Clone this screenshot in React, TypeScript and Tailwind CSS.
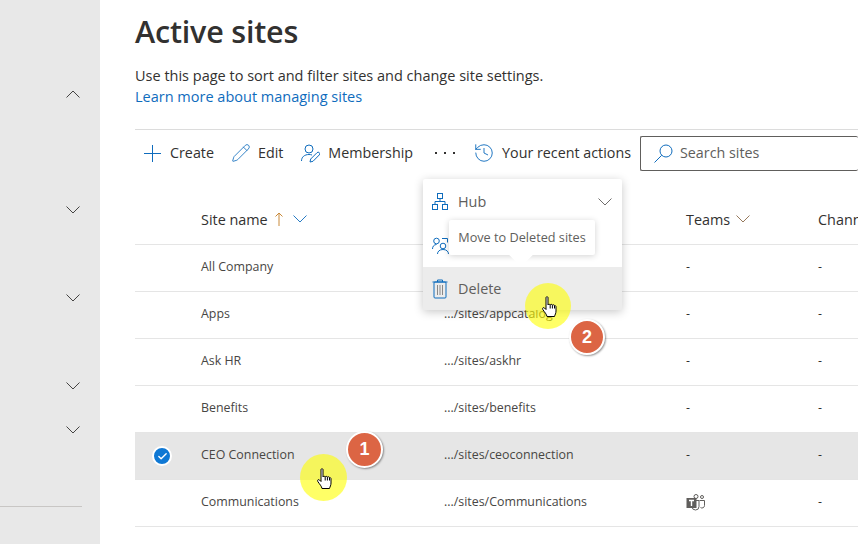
import { Pencil, History, Check } from "lucide-react"

const font = { fontFamily: '"Open Sans", "Noto Sans", sans-serif' }

const rows = [
  { name: "All Company", url: "", teams: "-" },
  { name: "Apps", url: ".../sites/appcatalog", teams: "-" },
  { name: "Ask HR", url: ".../sites/askhr", teams: "-" },
  { name: "Benefits", url: ".../sites/benefits", teams: "-" },
  { name: "CEO Connection", url: ".../sites/ceoconnection", teams: "-", selected: true },
  { name: "Communications", url: ".../sites/Communications", teams: "icon" },
]

function Chev({ up, color = "#323130", className = "" }: { up?: boolean; color?: string; className?: string }) {
  return (
    <svg className={className} width="14" height="8" viewBox="0 0 14 8" fill="none" stroke={color} strokeWidth="0.9">
      <path d={up ? "M.5 7.500L7 1l6.500 6.500" : "M.5.500L7 7 13.500.500"} />
    </svg>
  )
}

function PlusIcon() {
  return (
    <svg className="ml-[9px]" width="17" height="17" viewBox="0 0 17 17" stroke="#0f6cbd" strokeWidth="1">
      <path d="M8.500 0v17M0 8.500h17" />
    </svg>
  )
}

function SearchIcon() {
  return (
    <svg width="19" height="19" viewBox="0 0 19 19" fill="none" stroke="#0f6cbd" strokeWidth="1">
      <circle cx="12" cy="7" r="6" />
      <path d="M7.700 11.300L.5 18.500" />
    </svg>
  )
}

function HubIcon() {
  return (
    <svg width="18" height="19" viewBox="0 0 18 19" fill="none" stroke="#0f6cbd" strokeWidth="1">
      <rect x="6.500" y="1.500" width="5" height="5" />
      <rect x="1.500" y="12.500" width="5" height="5" />
      <rect x="11.500" y="12.500" width="5" height="5" />
      <path d="M9 6.500V9.500M4 12.500V9.500H14V12.500" />
    </svg>
  )
}

function MembershipIcon() {
  return (
    <svg className="ml-[18px]" width="19" height="19" viewBox="0 0 19 19" fill="none" stroke="#0f6cbd" strokeWidth="1">
      <circle cx="8" cy="5" r="4" />
      <path d="M.5 17c0-4 3-6.500 7.500-6.500 1.200 0 2.200.2 3 .5" />
      <path d="M9 18l.7-3 6.300-6.300a1.500 1.500 0 0 1 2.300 2.200L12 17.300z" />
    </svg>
  )
}

function MembersIcon() {
  return (
    <svg width="18" height="18" viewBox="0 0 18 18" fill="none" stroke="#0f6cbd" strokeWidth="1">
      <circle cx="4.500" cy="5" r="2.800" />
      <circle cx="11" cy="10" r="2.800" />
      <path d="M.5 13c0-2.500 1.500-4.500 4-4.500M5.500 18c0-2.500 2-4.500 5.500-4.500s5.500 2 5.500 4.500" />
      <path d="M10 2.500h5.500v4" />
    </svg>
  )
}

function TrashIcon() {
  return (
    <svg width="16" height="20" viewBox="0 0 16 20" fill="none" stroke="#0f6cbd" strokeWidth="1">
      <path d="M.5 3h15M5.500 3V1h5v2" />
      <rect x="2" y="3" width="12" height="16" rx="1" />
      <path d="M5.500 6v10M8 6v10M10.500 6v10" stroke="#8a8886" />
    </svg>
  )
}

function TeamsIcon() {
  return (
    <svg width="20" height="18" viewBox="0 0 20 18" fill="none" stroke="#605e5c" strokeWidth="1">
      <circle cx="10" cy="3.500" r="2" />
      <circle cx="16" cy="4" r="1.500" />
      <path d="M6 7.500h7v6a3.500 3.500 0 0 1-7 0M13.500 7.500h5v5a2.500 2.500 0 0 1-4 2" />
      <rect x="0.500" y="5" width="10" height="10" fill="#605e5c" stroke="none" />
      <path d="M3 7.500h5M5.500 7.500v5.500" stroke="#ffffff" strokeWidth="1.400" />
    </svg>
  )
}

function HandCursor() {
  return (
    <svg width="16" height="22" viewBox="0 0 16 22" fill="#ffffff" stroke="#000000" strokeWidth="1" strokeLinejoin="round">
      <path d="M4 1.500c0-1 2-1 2 0V9c.3-1 2-1 2.200 0 .3-.9 2-.9 2.200.2.400-.8 2.100-.6 2.100.5.500-.4 1.500 0 1.500 1V15c0 2.500-1 3.500-1.500 5.500h-7.500C4.500 18 2.800 16.500.8 13.500c-.8-1.500.7-2.500 1.700-1.500L4 13.500z" />
      <path d="M8.200 9v3.500M10.400 9.200v3.300M12.500 10v2.500" />
    </svg>
  )
}

export default function App() {
  return (
    <div className="relative flex w-[858px] h-[544px] overflow-hidden bg-white text-[#323130]" style={font}>
      {/* left nav */}
      <aside className="w-[100px] h-full shrink-0 bg-[#e8e8e8] flex flex-col relative">
        <Chev up className="absolute left-[66px] top-[90px]" />
        <Chev className="absolute left-[66px] top-[206px]" />
        <Chev className="absolute left-[66px] top-[294px]" />
        <Chev className="absolute left-[66px] top-[382px]" />
        <Chev className="absolute left-[66px] top-[426px]" />
        <div className="absolute left-0 top-[506px] w-[82px] h-px bg-[#c8c6c4]" />
      </aside>

      <main className="flex-1 min-w-0 pl-[35px] pt-[11px]">
        <h1 className="text-[30.500px] leading-[40px] font-semibold tracking-[-0.2px]">Active sites</h1>
        <p className="mt-[14px] text-[14.500px] leading-[21px]">Use this page to sort and filter sites and change site settings.</p>
        <a className="block text-[14.500px] leading-[21px] text-[#0f6cbd]">Learn more about managing sites</a>

        <div className="mt-[22px] w-[723px] border-t border-[#dcdcdc] h-[47px] flex items-center text-[14.300px] whitespace-nowrap">
          <PlusIcon />
          <span className="ml-[9px]">Create</span>
          <Pencil className="ml-[17px] text-[#0f6cbd]" size={20} strokeWidth={1} />
          <span className="ml-[7px]">Edit</span>
          <MembershipIcon />
          <span className="ml-[8px]">Membership</span>
          <span className="ml-[22px] w-[20px] flex justify-between">
            <i className="w-[2px] h-[2px] bg-[#323130]" />
            <i className="w-[2px] h-[2px] bg-[#323130]" />
            <i className="w-[2px] h-[2px] bg-[#323130]" />
          </span>
          <History className="ml-[18px] text-[#0f6cbd]" size={22} strokeWidth={1} />
          <span className="ml-[7px]">Your recent actions</span>
          <div className="ml-[9px] flex-1 h-[35px] border border-[#605e5c] border-r-0 rounded-[2px] flex items-center pl-[13px]">
            <SearchIcon />
            <span className="ml-[7px] text-[#605e5c]">Search sites</span>
          </div>
        </div>

        <div className="w-[723px] h-[69px] border-b border-[#e5e5e5] grid grid-cols-[66px_243px_242px_132px_40px] items-center text-[14.400px] font-medium whitespace-nowrap pt-[19px]">
          <span />
          <span className="flex items-center">
            Site name
            <svg className="ml-[7px]" width="8" height="14" viewBox="0 0 8 14" fill="none" stroke="#c98a3a" strokeWidth="1">
              <path d="M4 14V1M.5 4.500L4 1l3.500 3.500" />
            </svg>
            <Chev color="#0f6cbd" className="ml-[10px]" />
          </span>
          <span />
          <span className="flex items-center">
            Teams
            <Chev color="#8a6a4a" className="ml-[6px]" />
          </span>
          <span className="overflow-hidden">Channels</span>
        </div>

        {rows.map((r) => (
          <div
            key={r.name}
            className={`w-[723px] h-[47px] pb-[2px] border-b border-[#e5e5e5] grid grid-cols-[66px_243px_242px_132px_40px] items-center text-[12.400px] whitespace-nowrap ${r.selected ? "bg-[#e6e6e6]" : ""}`}
          >
            <span className="flex justify-center">
              {r.selected && (
                <span className="ml-[-12px] mt-[2px] w-[20px] h-[20px] rounded-full bg-[#0f78d4] border-2 border-white flex items-center justify-center">
                  <Check className="text-white" size={11} strokeWidth={3} />
                </span>
              )}
            </span>
            <span className="text-[#484644]">{r.name}</span>
            <span className="text-[#484644]">{r.url}</span>
            <span>{r.teams === "icon" ? <TeamsIcon /> : "-"}</span>
            <span>-</span>
          </div>
        ))}
      </main>

      {/* overflow menu */}
      <div className="absolute left-[423px] top-[179px] w-[199px] h-[131px] bg-white rounded-[2px] shadow-[0_2px_10px_rgba(0,0,0,0.22)] text-[14.400px] text-[#605e5c]">
        <div className="h-[44px] flex items-center pl-[8px] pr-[10px] pt-[1px]">
          <HubIcon />
          <span className="ml-[9px] flex-1">Hub</span>
          <Chev color="#605e5c" />
        </div>
        <div className="h-[44px] flex items-center pl-[9px]">
          <MembersIcon />
        </div>
        <div className="h-[43px] flex items-center pl-[9px] pt-[1px] bg-[#ececec]">
          <TrashIcon />
          <span className="ml-[10px]">Delete</span>
        </div>
      </div>

      {/* tooltip */}
      <div className="absolute left-[449px] top-[220px] w-[146px] h-[35px] bg-white rounded-[2px] shadow-[0_1px_6px_rgba(0,0,0,0.18)] flex items-center justify-center text-[12.700px] text-[#605e5c] whitespace-nowrap">
        Move to Deleted sites
        <div className="absolute left-[63px] top-[25px] w-[18px] h-[18px] rotate-45 bg-white" />
      </div>

      {/* step markers */}
      <div className="absolute left-[525px] top-[283px] w-[46px] h-[46px] rounded-full bg-[#ffff00]/60" />
      <div className="absolute left-[542px] top-[296px]"><HandCursor /></div>
      <div className="absolute left-[569px] top-[319px] w-[36px] h-[36px] rounded-full bg-[#dc6544] border-2 border-white shadow-[1px_1px_2px_rgba(0,0,0,0.4)] flex items-center justify-center text-white text-[18px] font-bold" style={{ fontFamily: '"Liberation Sans", sans-serif' }}>2</div>

      <div className="absolute left-[300px] top-[454px] w-[47px] h-[47px] rounded-full bg-[#ffff00]/60" />
      <div className="absolute left-[317px] top-[468px]"><HandCursor /></div>
      <div className="absolute left-[346px] top-[431px] w-[37px] h-[37px] rounded-full bg-[#dc6544] border-2 border-white shadow-[1px_1px_2px_rgba(0,0,0,0.4)] flex items-center justify-center text-white text-[18px] font-bold" style={{ fontFamily: '"Liberation Sans", sans-serif' }}>1</div>
    </div>
  )
}
